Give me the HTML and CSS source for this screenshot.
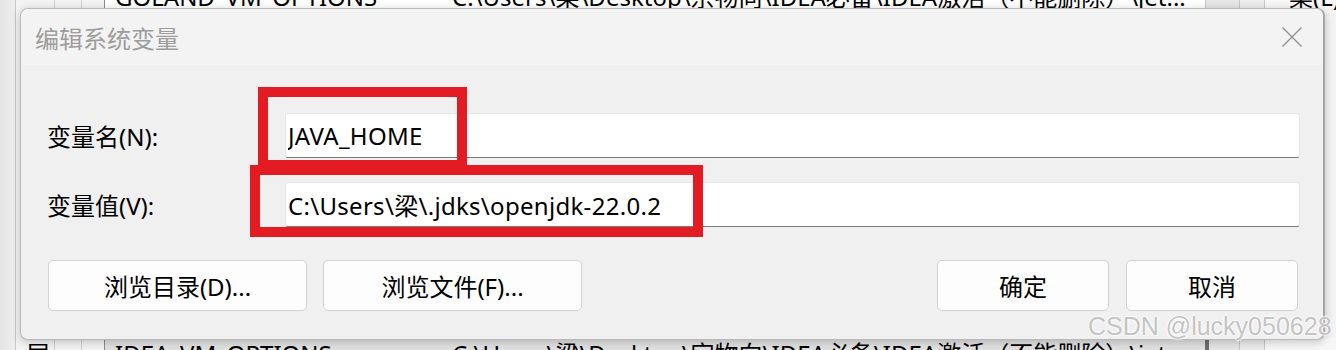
FILE: index.html
```html
<!DOCTYPE html>
<html>
<head>
<meta charset="utf-8">
<title>编辑系统变量</title>
<link rel="stylesheet" href="styles.css">
</head>
<body>

<div class="desk">
<div class="row row-top">
<span class="c1"></span>
<span class="c2"></span>
<span class="c3"></span>
<span class="c4"></span>
<span class="name">GOLAND_VM_OPTIONS</span>
<span class="value">C:\Users\梁\Desktop\宗物向\IDEA必备\IDEA激活（不能删除）\jet...</span>
<span class="c5"></span>
<span class="c6"></span>
<span class="side">桌(L)</span>
</div>
<div class="row row-bottom">
<span class="c1"></span>
<span class="c2">层</span>
<span class="c3"></span>
<span class="c4"></span>
<span class="name">IDEA_VM_OPTIONS</span>
<span class="value">C:\Users\梁\Desktop\宗物向\IDEA必备\IDEA激活（不能删除）\jet...</span>
<span class="c5"></span>
<span class="c6"></span>
<span class="side"></span>
</div>
</div>

<div class="dialog">
<div class="titlebar">
<span class="title">编辑系统变量</span>
<svg class="close" width="22" height="22" viewBox="0 0 22 22">
<path d="M1.5 1.5L20.5 20.5M20.5 1.5L1.5 20.5" />
</svg>
</div>
<div class="content">
<div class="field">
<label for="var-name">变量名(N):</label>
<input type="text" id="var-name" value="JAVA_HOME">
</div>
<div class="field">
<label for="var-value">变量值(V):</label>
<input type="text" id="var-value" value="C:\Users\梁\.jdks\openjdk-22.0.2">
</div>
<div class="actions">
<div class="group">
<button class="wide">浏览目录(D)...</button>
<button class="wide">浏览文件(F)...</button>
</div>
<div class="group right">
<button class="narrow">确定</button>
<button class="narrow">取消</button>
</div>
</div>
<div class="mark mark-name"></div>
<div class="mark mark-value"></div>
</div>
</div>

<div class="watermark">CSDN @lucky050628</div>

</body>
</html>
```

FILE: styles.css
```css
body{
margin: 0;
font-family: "Noto Sans", "Noto Sans CJK SC", sans-serif;
background-color: #f2f2f2;
}

/* window behind the dialog */
.desk{
height: 350px;
overflow: hidden;
display: flex;
flex-direction: column;
background: linear-gradient(to right, #e4e4e4 0, #efefef 15px, #c6c6c6 15px, #c6c6c6 16px, #f3f3f3 16px);
}
.row{
display: grid;
grid-template-columns: 16px 39px 27px 23px 335px 765px 35px 25px 1fr;
height: 32px;
line-height: 32px;
font-size: 24px;
color: #000;
white-space: nowrap;
}
.row span{
overflow: hidden;
}
.row-top{
margin-top: -19px;
}
.row-bottom{
margin-top: auto;
margin-bottom: -20px;
}
.row .c2,
.row .c3{
border-right: 1px solid #cfcfcf;
}
.row .c4{
border-right: 1px solid #8c8c8c;
}
.row .name{
padding-left: 10px;
}
.row .value{
padding-left: 12px;
}
.row-top .name,
.row-top .value{
background-color: #fff;
}
.row-bottom .name,
.row-bottom .value{
background-color: #e1e1e1;
}
.row-bottom .c2{
padding-left: 10px;
overflow: visible;
}
.row .c5{
background-color: #e6e6e6;
border-left: 1px solid #c8c8c8;
border-right: 1px solid #c8c8c8;
}
.row-bottom .c5{
border-left: 4px solid #6e6e6e;
}
.row .c6{
background-color: #ececec;
border-right: 1px solid #c8c8c8;
}
.row .side{
padding-left: 24px;
background-color: #f7f7f7;
}

/* dialog */
.dialog{
position: absolute;
left: 20px;
top: 8px;
width: 1305px;
height: 332px;
box-sizing: border-box;
border: 1px solid #b9b9b9;
border-right: 2px solid #a4a4a4;
border-radius: 8px;
background-color: #f0f0f0;
box-shadow: 0 2px 10px rgba(0, 0, 0, 0.22);
overflow: hidden;
}
.titlebar{
height: 56px;
display: flex;
align-items: center;
justify-content: space-between;
padding: 0 20px 0 14px;
background-color: #f3f3f3;
}
.title{
font-size: 24px;
color: #9d9d9d;
}
.close path{
stroke: #8e8e8e;
stroke-width: 1.3;
fill: none;
}
.content{
position: relative;
padding: 48px 23px 0 25px;
}
.field{
display: grid;
grid-template-columns: 239px 1fr;
align-items: center;
margin-bottom: 24px;
}
label{
font-size: 24px;
color: #000;
padding-left: 1px;
}
input{
height: 45px;
box-sizing: border-box;
padding: 0 2px;
font-family: "Noto Sans", "Noto Sans CJK SC", sans-serif;
font-size: 24px;
letter-spacing: 0.3px;
color: #000;
background-color: #fff;
border: 1px solid #e6e6e6;
border-bottom: 1px solid #7c7c7c;
border-radius: 3px;
outline: none;
}
.actions{
display: flex;
justify-content: space-between;
margin-top: 33px;
padding-left: 2px;
}
.group{
display: flex;
gap: 16px;
}
.right{
gap: 17px;
margin-right: 2px;
}
button{
height: 51px;
font-family: "Noto Sans", "Noto Sans CJK SC", sans-serif;
font-size: 24px;
color: #000;
background-color: #fdfdfd;
border: 1px solid #d2d2d2;
border-radius: 5px;
}
.wide{
width: 259px;
}
.narrow{
width: 172px;
}

/* red annotation boxes */
.mark{
position: absolute;
border: 10px solid #e31c23;
box-sizing: border-box;
}
.mark-name{
left: 237px;
top: 22px;
width: 209px;
height: 78px;
border-bottom-width: 5px;
}
.mark-value{
left: 229px;
top: 100px;
width: 453px;
height: 72px;
}

.watermark{
position: absolute;
left: 1088px;
top: 314px;
font-family: "Liberation Sans", sans-serif;
font-size: 25px;
line-height: 25px;
color: #c4c4c4;
text-shadow: 0 0 2px #fff, 0 0 2px #fff, 0 0 3px #fff;
}
```
